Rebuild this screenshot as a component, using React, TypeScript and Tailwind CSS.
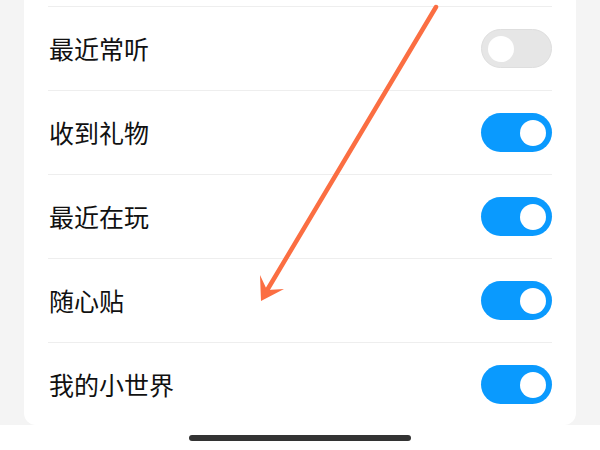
import React from 'react';

const rows = [
  { label: '最近常听', on: false },
  { label: '收到礼物', on: true },
  { label: '最近在玩', on: true },
  { label: '随心贴', on: true },
  { label: '我的小世界', on: true },
];

const Toggle = ({ on }: { on: boolean }) => (
  <div
    className={
      on
        ? 'flex h-[39px] w-[71px] items-center justify-end rounded-full bg-[#0a9afe] pr-[6px]'
        : 'flex h-[39px] w-[71px] items-center justify-start rounded-full border border-[#dedede] bg-[#e6e6e6] pl-[6px]'
    }
  >
    <div className="h-[26px] w-[26px] rounded-full bg-white" />
  </div>
);

const App = () => {
  return (
    <div
      className="relative h-[450px] w-[600px] overflow-hidden bg-white"
      style={{ fontFamily: '"Noto Sans CJK SC", "Noto Sans", sans-serif' }}
    >
      <div className="h-[425px] bg-[#f4f4f4] px-6">
        <div className="h-full rounded-b-xl bg-white px-6 pt-[6px]">
          {rows.map((r) => (
            <div
              key={r.label}
              className="flex h-[84px] items-center justify-between border-t border-[#eeeeee]"
            >
              <span className="pl-[1px] text-[25px] leading-none text-[#111111]">{r.label}</span>
              <Toggle on={r.on} />
            </div>
          ))}
        </div>
      </div>
      <div className="flex h-[25px] justify-center pt-[10px]">
        <div className="h-[6px] w-[222px] rounded-full bg-[#333333]" />
      </div>

      {/* annotation arrow */}
      <svg className="pointer-events-none absolute inset-0" width="600" height="450" viewBox="0 0 600 450">
        <line x1="436" y1="7" x2="266" y2="292" stroke="#fb6e42" strokeWidth="4.5" strokeLinecap="round" />
        <path d="M261 301 L260 275 L267 290 L284 289 Z" fill="#fb6e42" />
      </svg>
    </div>
  );
};

export default App;
